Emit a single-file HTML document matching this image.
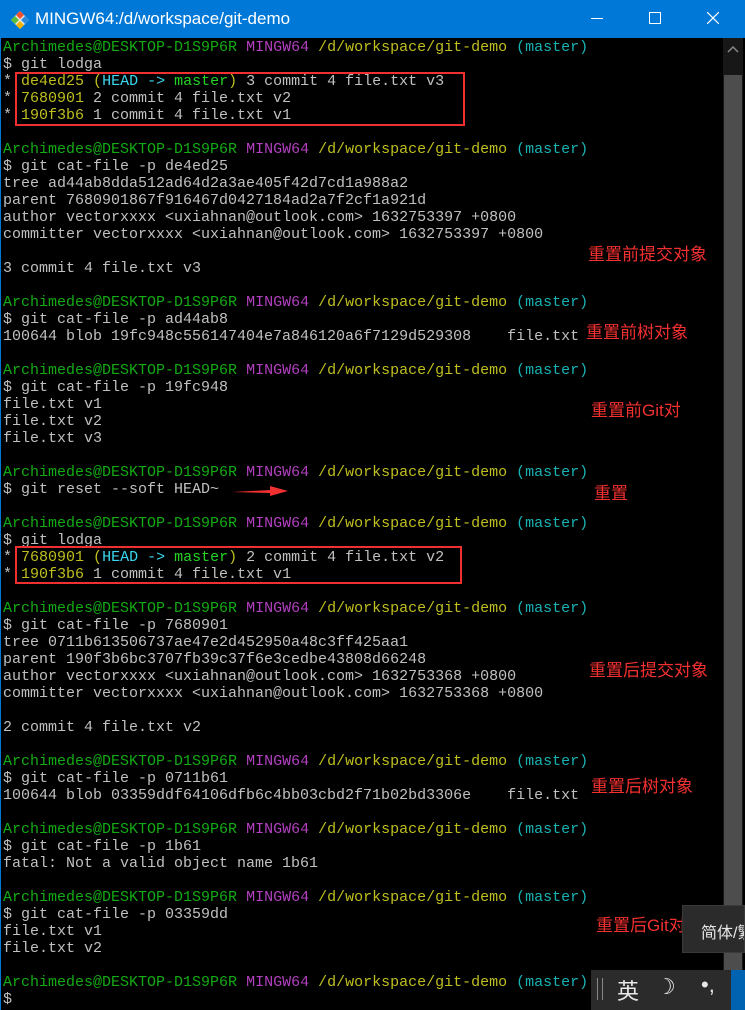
<!DOCTYPE html>
<html><head><meta charset="utf-8"><style>
body{margin:0;width:745px;height:1010px;overflow:hidden;background:#000;position:relative;font-family:"Liberation Sans","Noto Sans CJK SC",sans-serif}
#tb{position:absolute;left:0;top:0;width:745px;height:38px;background:#0078d7;color:#fff}
#tb .t{position:absolute;left:35px;top:9px;font-size:17px;font-family:"Liberation Sans","DejaVu Sans",sans-serif}
#term{position:absolute;left:0;top:38px;width:723px;height:972px;border-left:1px solid #0078d7;box-sizing:border-box}
pre{position:absolute;left:3px;top:39px;margin:0;font-family:"Liberation Mono",monospace;font-size:15px;line-height:17px;color:#c0c0c0}
.g{color:#13ab13}.m{color:#b23fc0}.y{color:#bfbf1f}.c{color:#18b2b2}.hc{color:#3ad7f0}.hg{color:#24d324}
#sb{position:absolute;left:723px;top:38px;width:20px;height:972px;background:#171717}
#th{position:absolute;left:724px;top:75px;width:18px;height:895px;background:#4d4d4d}
.box{position:absolute;border:2px solid #f03030}
.ann{position:absolute;color:#f23030;font-size:17px}
</style></head><body>
<div id="tb">
<svg style="position:absolute;left:10px;top:10px" width="20" height="20" viewBox="0 0 20 20"><path d="M10 1 L19 10 L10 19 L1 10Z" fill="#e8e8e8"/><path d="M10 1 L14 5 L10 9 L6 5Z" fill="#f05030"/><path d="M15 6 L19 10 L15 14 L11 10Z" fill="#2a8adc"/><path d="M5 6 L9 10 L5 14 L1 10Z" fill="#5cbf3a"/><path d="M10 11 L14 15 L10 19 L6 15Z" fill="#f0b400"/></svg>
<div class="t">MINGW64:/d/workspace/git-demo</div>
<div style="position:absolute;left:591px;top:18px;width:12px;height:1px;background:#fff"></div>
<div style="position:absolute;left:649px;top:12px;width:10px;height:10px;border:1px solid #fff"></div>
<svg style="position:absolute;left:707px;top:12px" width="12" height="12"><path d="M0 0L12 12M12 0L0 12" stroke="#fff" stroke-width="1.2"/></svg>
</div>
<div id="term"></div>
<div id="sb"></div><div id="th"></div>
<svg style="position:absolute;left:726px;top:44px" width="14" height="10"><path d="M2 8L7 3L12 8" stroke="#888" stroke-width="1.5" fill="none"/></svg>
<pre><span class="g">Archimedes@DESKTOP-D1S9P6R</span> <span class="m">MINGW64</span> <span class="y">/d/workspace/git-demo</span> <span class="c">(master)</span>
$ git lodga
* <span class="y">de4ed25</span> <span class="y">(</span><span class="hc">HEAD -&gt; </span><span class="hg">master</span><span class="y">)</span> 3 commit 4 file.txt v3
* <span class="y">7680901</span> 2 commit 4 file.txt v2
* <span class="y">190f3b6</span> 1 commit 4 file.txt v1

<span class="g">Archimedes@DESKTOP-D1S9P6R</span> <span class="m">MINGW64</span> <span class="y">/d/workspace/git-demo</span> <span class="c">(master)</span>
$ git cat-file -p de4ed25
tree ad44ab8dda512ad64d2a3ae405f42d7cd1a988a2
parent 7680901867f916467d0427184ad2a7f2cf1a921d
author vectorxxxx &lt;uxiahnan@outlook.com&gt; 1632753397 +0800
committer vectorxxxx &lt;uxiahnan@outlook.com&gt; 1632753397 +0800

3 commit 4 file.txt v3

<span class="g">Archimedes@DESKTOP-D1S9P6R</span> <span class="m">MINGW64</span> <span class="y">/d/workspace/git-demo</span> <span class="c">(master)</span>
$ git cat-file -p ad44ab8
100644 blob 19fc948c556147404e7a846120a6f7129d529308    file.txt

<span class="g">Archimedes@DESKTOP-D1S9P6R</span> <span class="m">MINGW64</span> <span class="y">/d/workspace/git-demo</span> <span class="c">(master)</span>
$ git cat-file -p 19fc948
file.txt v1
file.txt v2
file.txt v3

<span class="g">Archimedes@DESKTOP-D1S9P6R</span> <span class="m">MINGW64</span> <span class="y">/d/workspace/git-demo</span> <span class="c">(master)</span>
$ git reset --soft HEAD~

<span class="g">Archimedes@DESKTOP-D1S9P6R</span> <span class="m">MINGW64</span> <span class="y">/d/workspace/git-demo</span> <span class="c">(master)</span>
$ git lodga
* <span class="y">7680901</span> <span class="y">(</span><span class="hc">HEAD -&gt; </span><span class="hg">master</span><span class="y">)</span> 2 commit 4 file.txt v2
* <span class="y">190f3b6</span> 1 commit 4 file.txt v1

<span class="g">Archimedes@DESKTOP-D1S9P6R</span> <span class="m">MINGW64</span> <span class="y">/d/workspace/git-demo</span> <span class="c">(master)</span>
$ git cat-file -p 7680901
tree 0711b613506737ae47e2d452950a48c3ff425aa1
parent 190f3b6bc3707fb39c37f6e3cedbe43808d66248
author vectorxxxx &lt;uxiahnan@outlook.com&gt; 1632753368 +0800
committer vectorxxxx &lt;uxiahnan@outlook.com&gt; 1632753368 +0800

2 commit 4 file.txt v2

<span class="g">Archimedes@DESKTOP-D1S9P6R</span> <span class="m">MINGW64</span> <span class="y">/d/workspace/git-demo</span> <span class="c">(master)</span>
$ git cat-file -p 0711b61
100644 blob 03359ddf64106dfb6c4bb03cbd2f71b02bd3306e    file.txt

<span class="g">Archimedes@DESKTOP-D1S9P6R</span> <span class="m">MINGW64</span> <span class="y">/d/workspace/git-demo</span> <span class="c">(master)</span>
$ git cat-file -p 1b61
fatal: Not a valid object name 1b61

<span class="g">Archimedes@DESKTOP-D1S9P6R</span> <span class="m">MINGW64</span> <span class="y">/d/workspace/git-demo</span> <span class="c">(master)</span>
$ git cat-file -p 03359dd
file.txt v1
file.txt v2

<span class="g">Archimedes@DESKTOP-D1S9P6R</span> <span class="m">MINGW64</span> <span class="y">/d/workspace/git-demo</span> <span class="c">(master)</span>
$</pre>
<div class="box" style="left:15px;top:72px;width:446px;height:50px"></div>
<div class="box" style="left:15px;top:546px;width:443px;height:34px"></div>
<svg style="position:absolute;left:230px;top:484px" width="60" height="14"><path d="M2 8L40 6L40 2L58 7L40 12L40 9Z" fill="#f03030"/></svg>
<div class="ann" style="left:588px;top:240px">重置前提交对象</div>
<div class="ann" style="left:586px;top:318px">重置前树对象</div>
<div class="ann" style="left:591px;top:396px">重置前Git对</div>
<div class="ann" style="left:594px;top:479px">重置</div>
<div class="ann" style="left:589px;top:656px">重置后提交对象</div>
<div class="ann" style="left:591px;top:772px">重置后树对象</div>
<div class="ann" style="left:596px;top:911px">重置后Git对</div>
<div style="position:absolute;left:682px;top:905px;width:63px;height:48px;background:#2b2b2b;border:1px solid #3a3a3a;box-sizing:border-box;color:#e8e8e8;font-size:16px;padding:13px 0 0 18px;white-space:nowrap;overflow:hidden">简体/繁</div>
<div style="position:absolute;left:591px;top:970px;width:140px;height:40px;background:#2b2b2b;color:#e8e8e8;font-size:22px;white-space:nowrap">
<span style="position:absolute;left:6px;top:8px;width:4px;height:22px;border-left:1px solid #888;border-right:1px solid #888"></span>
<span style="position:absolute;left:26px;top:4px">英</span>
<span style="position:absolute;left:65px;top:4px">☽</span>
<span style="position:absolute;left:110px;top:2px">•,</span>
</div>
<div style="position:absolute;left:731px;top:970px;width:14px;height:40px;background:#0063b1"></div>
</body></html>
